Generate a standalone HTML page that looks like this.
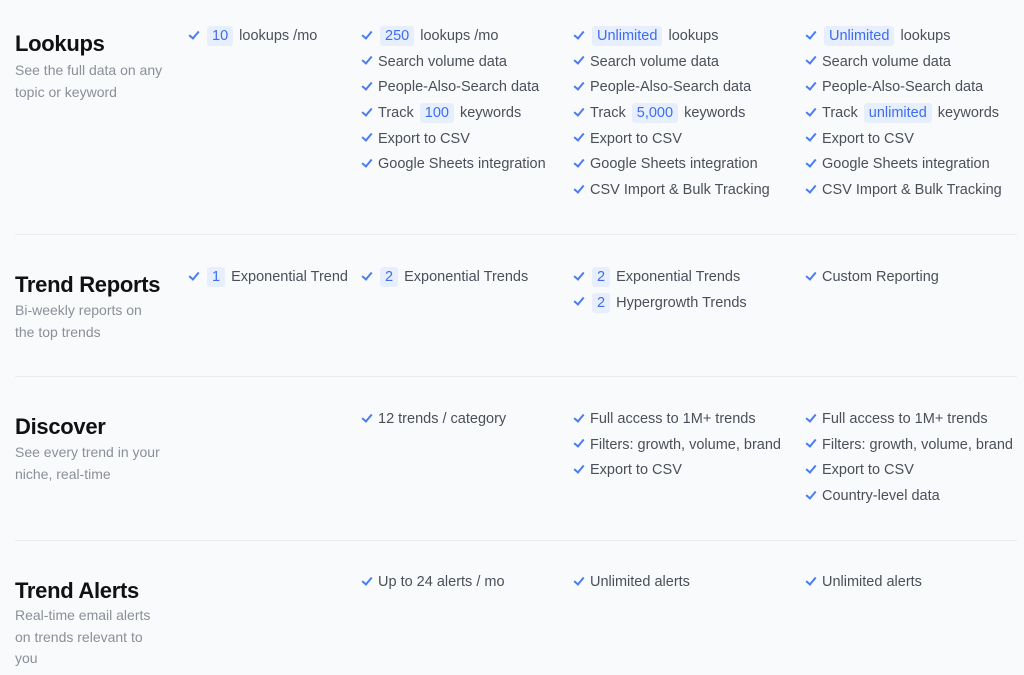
<!DOCTYPE html><html><head><style>
body{margin:0;width:1024px;height:675px;background:#f9fafc;font-family:"Liberation Sans",sans-serif;position:relative;overflow:hidden}
.t{position:absolute;left:15px;font-size:22px;font-weight:bold;color:#111;letter-spacing:-0.3px}
.s{position:absolute;left:15px;font-size:14px;color:#8a8f98;line-height:21.5px;width:150px}
.c{position:absolute;font-size:14.5px;color:#4a4f59}
.c div{height:25.7px;line-height:25.7px;white-space:nowrap}
.c div:before{content:"";display:inline-block;width:8px;height:4px;border-left:2px solid #4a7cf0;border-bottom:2px solid #4a7cf0;transform:rotate(-50deg);margin:0 6px 5px 2px;vertical-align:middle}
b{font-weight:normal;background:#e7eefd;color:#3d6ef0;padding:2px 5px;border-radius:3px;margin:0 2px}
.h{position:absolute;left:15px;width:1002px;height:1px;background:#ebedf0}
</style></head><body>
<div class="t" style="top:31px">Lookups</div>
<div class="s" style="top:60px">See the full data on any topic or keyword</div>
<div class="c" style="left:187px;top:24px"><div><b>10</b> lookups /mo</div></div>
<div class="c" style="left:360px;top:24px"><div><b>250</b> lookups /mo</div><div>Search volume data</div><div>People-Also-Search data</div><div>Track <b>100</b> keywords</div><div>Export to CSV</div><div>Google Sheets integration</div></div>
<div class="c" style="left:572px;top:24px"><div><b>Unlimited</b> lookups</div><div>Search volume data</div><div>People-Also-Search data</div><div>Track <b>5,000</b> keywords</div><div>Export to CSV</div><div>Google Sheets integration</div><div>CSV Import &amp; Bulk Tracking</div></div>
<div class="c" style="left:804px;top:24px"><div><b>Unlimited</b> lookups</div><div>Search volume data</div><div>People-Also-Search data</div><div>Track <b>unlimited</b> keywords</div><div>Export to CSV</div><div>Google Sheets integration</div><div>CSV Import &amp; Bulk Tracking</div></div>
<div class="h" style="top:234px"></div>
<div class="t" style="top:272px">Trend Reports</div>
<div class="s" style="top:300px;width:145px">Bi-weekly reports on the top trends</div>
<div class="c" style="left:187px;top:265px"><div><b>1</b> Exponential Trend</div></div>
<div class="c" style="left:360px;top:265px"><div><b>2</b> Exponential Trends</div></div>
<div class="c" style="left:572px;top:265px"><div><b>2</b> Exponential Trends</div><div><b>2</b> Hypergrowth Trends</div></div>
<div class="c" style="left:804px;top:265px"><div>Custom Reporting</div></div>
<div class="h" style="top:376px"></div>
<div class="t" style="top:414px">Discover</div>
<div class="s" style="top:442px">See every trend in your niche, real-time</div>
<div class="c" style="left:360px;top:407px"><div>12 trends / category</div></div>
<div class="c" style="left:572px;top:407px"><div>Full access to 1M+ trends</div><div>Filters: growth, volume, brand</div><div>Export to CSV</div></div>
<div class="c" style="left:804px;top:407px"><div>Full access to 1M+ trends</div><div>Filters: growth, volume, brand</div><div>Export to CSV</div><div>Country-level data</div></div>
<div class="h" style="top:540px"></div>
<div class="t" style="top:578px">Trend Alerts</div>
<div class="s" style="top:605px">Real-time email alerts on trends relevant to you</div>
<div class="c" style="left:360px;top:570px"><div>Up to 24 alerts / mo</div></div>
<div class="c" style="left:572px;top:570px"><div>Unlimited alerts</div></div>
<div class="c" style="left:804px;top:570px"><div>Unlimited alerts</div></div>
</body></html>
